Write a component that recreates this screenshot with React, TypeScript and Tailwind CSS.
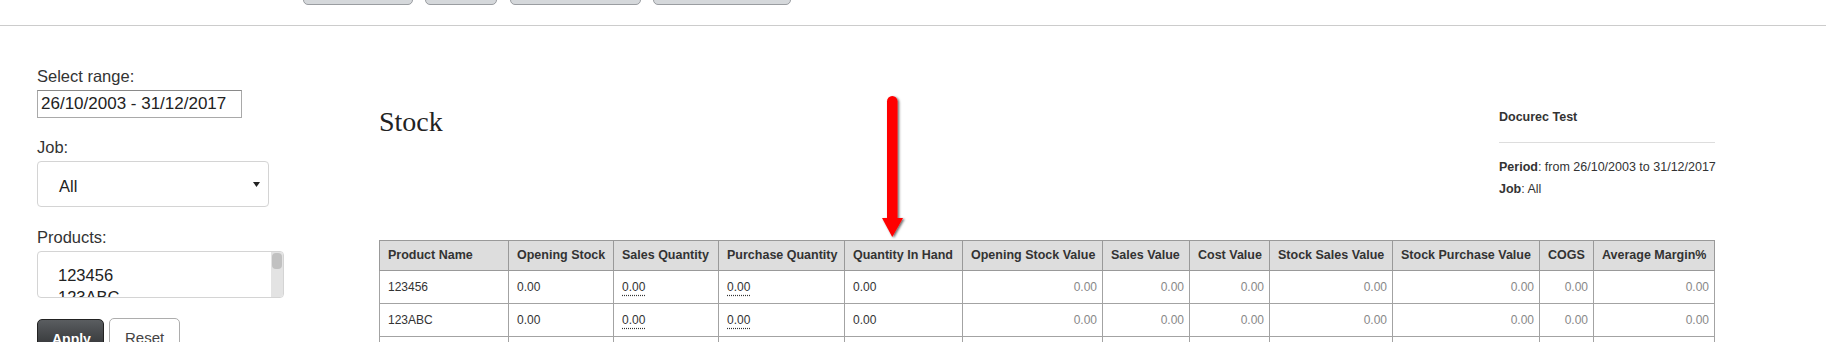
import React from 'react';

const columns = [
  { label: 'Product Name', col: 'w-[129px]' },
  { label: 'Opening Stock', col: 'w-[105px]' },
  { label: 'Sales Quantity', col: 'w-[105px]' },
  { label: 'Purchase Quantity', col: 'w-[126px]' },
  { label: 'Quantity In Hand', col: 'w-[118px]' },
  { label: 'Opening Stock Value', col: 'w-[140px]' },
  { label: 'Sales Value', col: 'w-[87px]' },
  { label: 'Cost Value', col: 'w-[80px]' },
  { label: 'Stock Sales Value', col: 'w-[123px]' },
  { label: 'Stock Purchase Value', col: 'w-[147px]' },
  { label: 'COGS', col: 'w-[54px]' },
  { label: 'Average Margin%', col: 'w-[121px]' },
];

const rows = ['123456', '123ABC'];

const cell = 'border border-[#a3a3a3] h-[33px] text-[12px] leading-[15px] whitespace-nowrap';
const leftCell = `${cell} pl-[8px] text-left text-[#333]`;
const rightCell = `${cell} pr-[5px] text-right text-[#888]`;
const dotted = 'underline decoration-dotted decoration-[#333] underline-offset-[4px]';

function Arrow() {
  return (
    <svg className="absolute left-[880px] top-[94px]" width="28" height="148" viewBox="0 0 28 148">
      <defs>
        <filter id="shade" x="-50%" y="-10%" width="200%" height="120%">
          <feDropShadow dx="1.5" dy="1" stdDeviation="1" floodColor="#000" floodOpacity="0.6" />
        </filter>
      </defs>
      <g filter="url(#shade)" fill="#ff0000">
        <rect x="7" y="2" width="10.5" height="128" rx="5.25" />
        <polygon points="2,124 23,124 12.25,143" />
      </g>
    </svg>
  );
}

export default function App() {
  return (
    <div className="relative w-full h-[342px] overflow-hidden bg-white text-[#333] font-['Liberation_Sans',Arial,sans-serif]">
      {/* top nav, buttons mostly scrolled off */}
      <div className="h-[26px] overflow-hidden border-b border-[#cccccc]">
        <div className="flex items-start pl-[303px]">
          <button aria-label="tab" className="w-[110px] h-[32px] -mt-[27px] rounded-[5px] border border-[#9a9da1] bg-[#d5d8db]" />
          <button aria-label="tab" className="w-[72px] h-[32px] -mt-[27px] ml-[12px] rounded-[5px] border border-[#9a9da1] bg-[#d5d8db]" />
          <button aria-label="tab" className="w-[131px] h-[32px] -mt-[27px] ml-[13px] rounded-[5px] border border-[#9a9da1] bg-[#d5d8db]" />
          <button aria-label="tab" className="w-[138px] h-[32px] -mt-[27px] ml-[12px] rounded-[5px] border border-[#9a9da1] bg-[#d5d8db]" />
        </div>
      </div>

      <div className="flex">
        {/* filters */}
        <aside className="w-[376px] shrink-0 pl-[37px] pt-[40px] text-[16.5px] leading-[20px]">
          <div>Select range:</div>
          <div className="mt-[4px] w-[205px] h-[28px] flex items-center pl-[3px] border border-[#a9a9a9] border-t-[#8a8a8a] text-[17px] text-[#222]">
            26/10/2003 - 31/12/2017
          </div>

          <div className="mt-[19px]">Job:</div>
          <div className="mt-[4px] w-[232px] h-[46px] flex items-center justify-between pl-[21px] pr-[8px] border border-[#d4d4d4] rounded-[4px] text-[#222]">
            <span className="pt-[3px]">All</span>
            <svg width="7" height="5" viewBox="0 0 7 5">
              <polygon points="0,0 7,0 3.5,5" fill="#222" />
            </svg>
          </div>

          <div className="mt-[20px]">Products:</div>
          <div className="mt-[4px] w-[247px] h-[47px] flex overflow-hidden border border-[#d4d4d4] rounded-[4px] text-[#222]">
            <div className="flex-1 pl-[20px] pt-[12px] leading-[22px]">
              <div>123456</div>
              <div>123ABC</div>
            </div>
            <div className="w-[12px] bg-[#e3e3e3] pt-[1px] px-[1px]">
              <div className="h-[16px] rounded-[4px] bg-[#c1c1c1]" />
            </div>
          </div>

          <div className="mt-[21px] flex items-start">
            <button className="w-[67px] h-[34px] pl-[14px] pt-[5px] text-left rounded-[5px] border border-[#222] bg-linear-to-b from-[#5a5d60] to-[#2e3032] text-white font-bold text-[14px] leading-[18px]">
              Apply
            </button>
            <button className="w-[71px] h-[34px] ml-[5px] -mt-[1px] pl-[15px] pt-[6px] text-left rounded-[5px] border border-[#adadad] bg-white text-[#444] text-[15px] leading-[18px]">
              Reset
            </button>
          </div>
        </aside>

        {/* report */}
        <main className="w-[1339px] shrink-0 pt-[81px]">
          <div className="flex items-start justify-between">
            <h2 className="ml-[3px] font-['Liberation_Serif',Georgia,serif] text-[28px] leading-[30px] text-[#222]">Stock</h2>
            <div className="w-[216px] pt-[1px] text-[12.5px] text-[#333]">
              <div className="font-bold leading-[18px]">Docurec Test</div>
              <div className="mt-[16px] border-t border-[#dddddd]" />
              <div className="mt-[13px] leading-[22px] whitespace-nowrap">
                <b>Period</b>: from 26/10/2003 to 31/12/2017
              </div>
              <div className="leading-[22px]">
                <b>Job</b>: All
              </div>
            </div>
          </div>

          <table className="mt-[40px] ml-[3px] w-[1335px] table-fixed border-collapse">
            <colgroup>
              {columns.map((c) => (
                <col key={c.label} className={c.col} />
              ))}
            </colgroup>
            <thead>
              <tr>
                {columns.map((c) => (
                  <th
                    key={c.label}
                    className="h-[30px] px-[8px] border border-[#999] bg-[#dddddd] text-left text-[12.5px] leading-[15px] font-bold whitespace-nowrap text-[#333]"
                  >
                    {c.label}
                  </th>
                ))}
              </tr>
            </thead>
            <tbody>
              {rows.map((name) => (
                <tr key={name}>
                  <td className={leftCell}>{name}</td>
                  <td className={leftCell}>0.00</td>
                  <td className={leftCell}>
                    <span className={dotted}>0.00</span>
                  </td>
                  <td className={leftCell}>
                    <span className={dotted}>0.00</span>
                  </td>
                  <td className={leftCell}>0.00</td>
                  <td className={rightCell}>0.00</td>
                  <td className={rightCell}>0.00</td>
                  <td className={rightCell}>0.00</td>
                  <td className={rightCell}>0.00</td>
                  <td className={rightCell}>0.00</td>
                  <td className={rightCell}>0.00</td>
                  <td className={rightCell}>0.00</td>
                </tr>
              ))}
              <tr>
                {columns.map((c) => (
                  <td key={c.label} className={leftCell}>
                    &nbsp;
                  </td>
                ))}
              </tr>
            </tbody>
          </table>
        </main>
      </div>

      <Arrow />
    </div>
  );
}
